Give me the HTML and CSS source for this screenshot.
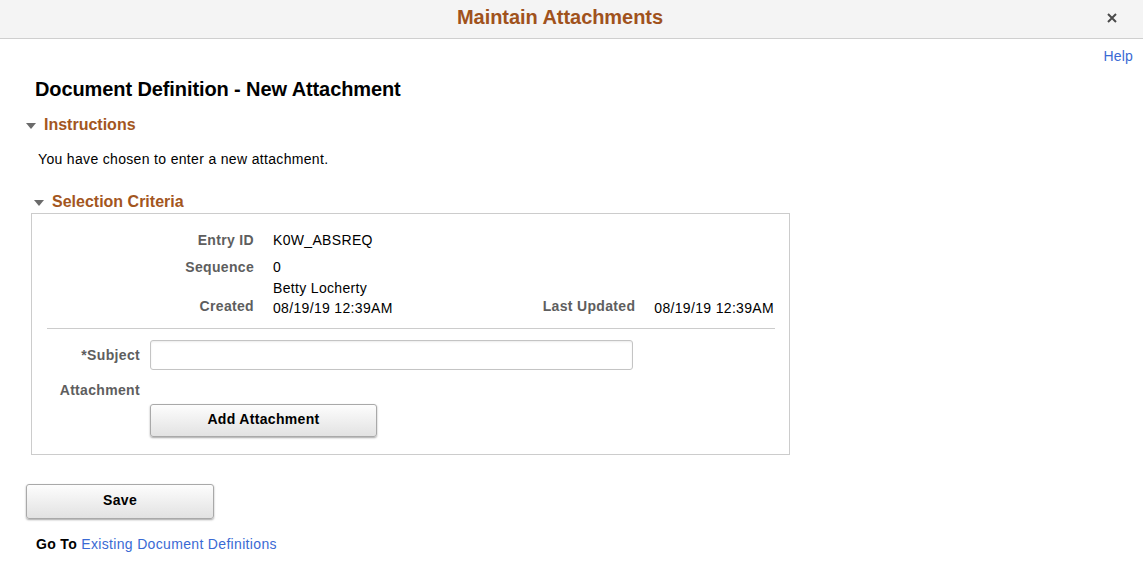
FILE: index.html
```html
<!DOCTYPE html>
<html lang="en">
<head>
<meta charset="utf-8">
<title>Maintain Attachments</title>
<link rel="stylesheet" href="styles.css">
</head>
<body>
<header class="topbar">
  <div class="topbar-title">Maintain Attachments</div>
  <div class="topbar-close" aria-label="Close">
    <svg width="10" height="10" viewBox="0 0 10 10"><path d="M1 1 L9 9 M9 1 L1 9" stroke="#4a4a4a" stroke-width="2" fill="none"/></svg>
  </div>
</header>
<main class="page">
  <div class="help-row"><a class="link" href="#">Help</a></div>
  <h1 class="page-title">Document Definition - New Attachment</h1>

  <div class="section-head instr-head">
    <span class="tri"></span><span class="section-text">Instructions</span>
  </div>
  <p class="instr-text">You have chosen to enter a new attachment.</p>

  <div class="section-head sel-head">
    <span class="tri"></span><span class="section-text">Selection Criteria</span>
  </div>
  <div class="criteria">
    <div class="row">
      <div class="label">Entry ID</div>
      <div class="value">K0W_ABSREQ</div>
    </div>
    <div class="row row-seq">
      <div class="label">Sequence</div>
      <div class="value">0</div>
    </div>
    <div class="row row-created">
      <div class="label lbl-low">Created</div>
      <div class="value">
        <div>Betty Locherty</div>
        <div>08/19/19 12:39AM</div>
      </div>
      <div class="right-group">
        <div class="label-plain lbl-low">Last Updated</div>
        <div class="value">08/19/19 12:39AM</div>
      </div>
    </div>
    <div class="divider"></div>
    <div class="row-subject">
      <div class="label2">*Subject</div>
      <input class="text-input" type="text">
    </div>
    <div class="row-attach">
      <div class="label2">Attachment</div>
    </div>
    <div class="row-btn">
      <button class="btn btn-attach" type="button">Add Attachment</button>
    </div>
  </div>

  <button class="btn btn-save" type="button">Save</button>
  <div class="goto"><span class="goto-label">Go To</span> <a class="link" href="#">Existing Document Definitions</a></div>
</main>
</body>
</html>
```

FILE: styles.css
```css
html, body {
  margin: 0;
  padding: 0;
  background: #ffffff;
  font-family: "Liberation Sans", Arial, sans-serif;
  font-size: 14px;
  letter-spacing: 0.33px;
  color: #000;
}

.topbar {
  height: 38px;
  background: #f4f4f4;
  border-bottom: 1px solid #cfcfcf;
  display: flex;
  align-items: center;
}

.topbar-title {
  flex: 1;
  text-align: center;
  padding-left: 23px;
  font-weight: bold;
  font-size: 20px;
  letter-spacing: -0.05px;
  color: #a0521c;
  line-height: 24px;
  margin-top: -5px;
}

.topbar-close {
  width: 30px;
  margin-right: 16px;
  display: flex;
  justify-content: center;
  align-items: center;
  margin-top: -3px;
}

.page {
  display: flex;
  flex-direction: column;
  align-items: flex-start;
}

.help-row {
  align-self: stretch;
  text-align: right;
  padding-right: 10px;
  margin-top: 9px;
  line-height: 16px;
  letter-spacing: 0.2px;
}

.link {
  color: #3a6ad4;
  text-decoration: none;
}

.page-title {
  margin: 13px 0 0 35px;
  font-size: 20px;
  line-height: 24px;
  font-weight: bold;
  letter-spacing: -0.1px;
}

.section-head {
  display: flex;
  align-items: center;
  line-height: 20px;
  font-size: 16px;
  font-weight: bold;
  letter-spacing: 0;
  color: #a3561e;
}

.instr-head {
  margin: 14px 0 0 26px;
}

.sel-head {
  margin: 25px 0 0 34px;
}

.tri {
  width: 0;
  height: 0;
  border-left: 5px solid transparent;
  border-right: 5px solid transparent;
  border-top: 6px solid #6b6b6b;
  margin-right: 8px;
  margin-top: 1px;
}

.instr-text {
  margin: 16px 0 0 38px;
  line-height: 16px;
}

.criteria {
  margin: 1px 0 0 31px;
  border: 1px solid #cccccc;
  padding: 16px 15px 17px 15px;
  box-sizing: border-box;
  width: 759px;
}

.row {
  display: flex;
  line-height: 20px;
}

.row-seq {
  margin-top: 7px;
}

.row-created {
  margin-top: 1px;
  align-items: flex-end;
}

.label {
  width: 207px;
  margin-right: 19px;
  text-align: right;
  font-weight: bold;
  color: #5e5e5e;
}

.label-plain {
  margin-right: 19px;
  font-weight: bold;
  color: #5e5e5e;
}

.lbl-low {
  padding-bottom: 2px;
}

.right-group {
  margin-left: auto;
  display: flex;
  align-items: flex-end;
}

.divider {
  margin-top: 10px;
  margin-right: -1px;
  border-top: 1px solid #cccccc;
}

.row-subject {
  margin-top: 11px;
  display: flex;
  align-items: center;
}

.label2 {
  width: 93px;
  margin-right: 10px;
  text-align: right;
  font-weight: bold;
  color: #5e5e5e;
  line-height: 20px;
}

.text-input {
  width: 483px;
  height: 30px;
  box-sizing: border-box;
  border: 1px solid #c4c4c4;
  border-radius: 3px;
  box-shadow: inset 0 1px 2px rgba(0,0,0,0.08);
  padding: 0 6px;
  font-family: inherit;
  font-size: 14px;
  margin: 0;
}

.row-attach {
  margin-top: 10px;
  display: flex;
}

.row-btn {
  margin-top: 4px;
  padding-left: 103px;
}

.btn {
  display: block;
  font-family: "Liberation Sans", Arial, sans-serif;
  font-weight: bold;
  font-size: 14px;
  letter-spacing: 0.33px;
  color: #000;
  background: linear-gradient(#fdfdfd, #e2e2e2);
  border: 1px solid #a9a9a9;
  border-radius: 3px;
  box-shadow: 0 1px 2px rgba(0,0,0,0.35);
  padding: 0 0 3px 0;
  margin: 0;
  box-sizing: border-box;
}

.btn-attach {
  width: 227px;
  height: 33px;
}

.btn-save {
  width: 188px;
  height: 35px;
  margin: 29px 0 0 26px;
}

.goto {
  margin: 17px 0 0 36px;
  line-height: 16px;
}

.goto-label {
  font-weight: bold;
}
```
